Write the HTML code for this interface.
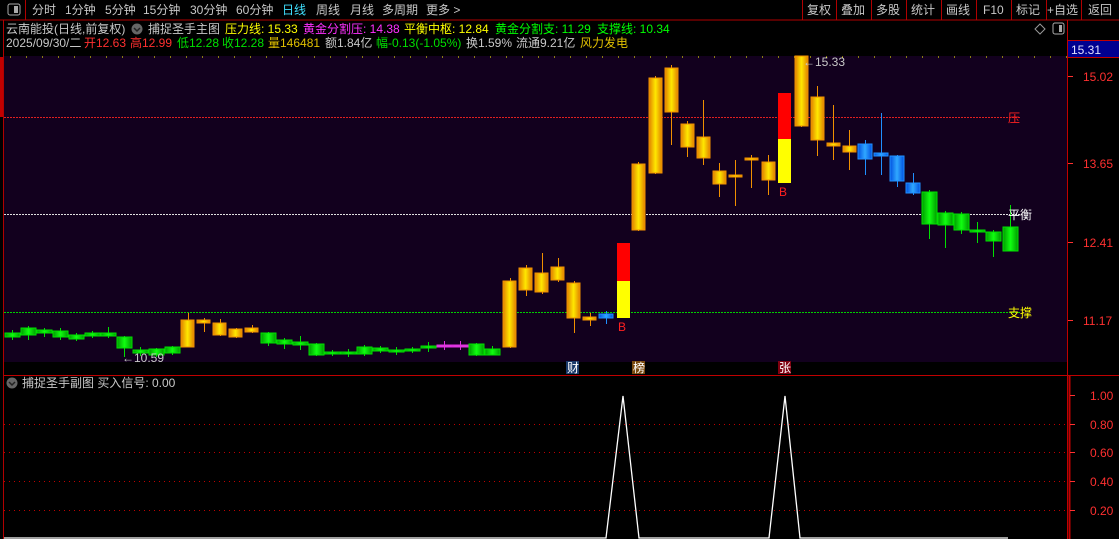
<!DOCTYPE html>
<html><head><meta charset="utf-8"><style>
html,body{margin:0;padding:0;background:#000;width:1119px;height:539px;overflow:hidden}
svg{display:block}
text{font-family:"Liberation Sans","Noto Sans CJK SC",sans-serif;font-size:12px}
</style></head><body>
<svg width="1119" height="539" xmlns="http://www.w3.org/2000/svg">
<defs>
<linearGradient id="y" x1="0" x2="1"><stop offset="0" stop-color="#e08000"/><stop offset=".5" stop-color="#ffe800"/><stop offset="1" stop-color="#e08000"/></linearGradient>
<linearGradient id="g" x1="0" x2="1"><stop offset="0" stop-color="#009a00"/><stop offset=".5" stop-color="#10ff10"/><stop offset="1" stop-color="#009a00"/></linearGradient>
<linearGradient id="b" x1="0" x2="1"><stop offset="0" stop-color="#0050e0"/><stop offset=".5" stop-color="#30a8ff"/><stop offset="1" stop-color="#0050e0"/></linearGradient>
</defs>
<rect width="1119" height="539" fill="#000"/>
<!-- toolbar -->
<line x1="0" y1="20" x2="1119" y2="20" stroke="#b00000"/>
<line x1="25.5" y1="0" x2="25.5" y2="20" stroke="#b00000"/>
<rect x="8" y="4" width="12" height="11" rx="2" fill="none" stroke="#aaa"/><rect x="14" y="6" width="4" height="7" fill="#aaa"/>
<g fill="#c8c8c8">
<text x="32" y="14">分时</text><text x="65" y="14">1分钟</text><text x="105" y="14">5分钟</text><text x="143" y="14">15分钟</text><text x="190" y="14">30分钟</text><text x="236" y="14">60分钟</text>
<text x="282" y="14" fill="#40e0ff">日线</text><text x="316" y="14">周线</text><text x="350" y="14">月线</text><text x="382" y="14">多周期</text><text x="426" y="14">更多 &gt;</text>
</g>
<g stroke="#b00000"><line x1="802.5" y1="0" x2="802.5" y2="20"/><line x1="836.5" y1="0" x2="836.5" y2="20"/><line x1="871.5" y1="0" x2="871.5" y2="20"/><line x1="906.5" y1="0" x2="906.5" y2="20"/><line x1="941.5" y1="0" x2="941.5" y2="20"/><line x1="976.5" y1="0" x2="976.5" y2="20"/><line x1="1011.5" y1="0" x2="1011.5" y2="20"/><line x1="1046.5" y1="0" x2="1046.5" y2="20"/><line x1="1081.5" y1="0" x2="1081.5" y2="20"/></g>
<g fill="#c8c8c8"><text x="807" y="14">复权</text><text x="841" y="14">叠加</text><text x="876" y="14">多股</text><text x="911" y="14">统计</text><text x="946" y="14">画线</text><text x="983" y="14">F10</text><text x="1016" y="14">标记</text><text x="1047" y="14">+自选</text><text x="1088" y="14">返回</text></g>
<!-- left bar -->
<rect x="0" y="57" width="4" height="60" fill="#c00000"/><line x1="3.5" y1="20" x2="3.5" y2="539" stroke="#b00000"/>
<!-- header -->
<text x="6" y="33" fill="#c8c8c8">云南能投(日线,前复权)</text>
<circle cx="137" cy="29" r="5.5" fill="#666"/><path d="M134 28l3 3 3-3" stroke="#222" stroke-width="1.5" fill="none"/>
<text x="148" y="33" fill="#c8c8c8">捕捉圣手主图</text>
<text x="225" y="33" fill="#ffff00">压力线: 15.33</text>
<text x="303" y="33" fill="#ff30ff">黄金分割压: 14.38</text>
<text x="404" y="33" fill="#ffff00">平衡中枢: 12.84</text>
<text x="495" y="33" fill="#00ff00">黄金分割支: 11.29</text>
<text x="597" y="33" fill="#00ff00">支撑线: 10.34</text>
<text x="6" y="47" fill="#c8c8c8">2025/09/30/二</text>
<text x="84" y="47" fill="#ff3030">开12.63</text><text x="130" y="47" fill="#ff3030">高12.99</text>
<text x="177" y="47" fill="#00e000">低12.28</text><text x="222" y="47" fill="#00e000">收12.28</text>
<text x="268" y="47" fill="#e0c000">量146481</text><text x="325" y="47" fill="#c8c8c8">额1.84亿</text>
<text x="376" y="47" fill="#00e000">幅-0.13(-1.05%)</text><text x="466" y="47" fill="#c8c8c8">换1.59%</text><text x="516" y="47" fill="#c8c8c8">流通9.21亿</text><text x="580" y="47" fill="#e0c000">风力发电</text>
<path d="M1040 24l5 5-5 5-5-5z" fill="none" stroke="#999"/>
<rect x="1053" y="23" width="11" height="11" rx="2" fill="none" stroke="#aaa"/><rect x="1059" y="25" width="3" height="7" fill="#aaa"/>
<!-- chart bg -->
<rect x="4" y="56" width="1063" height="306" fill="#12001e"/>
<line x1="10" y1="57" x2="1067" y2="57" stroke="#ffff00" stroke-dasharray="1 15"/>
<line x1="4" y1="117.5" x2="1020" y2="117.5" stroke="#e02020" stroke-dasharray="2 1"/>
<line x1="4" y1="214.5" x2="1020" y2="214.5" stroke="#e0e0e0" stroke-dasharray="2 1"/>
<line x1="4" y1="312.5" x2="1020" y2="312.5" stroke="#00d000" stroke-dasharray="2 1"/>
<!-- right axis -->
<line x1="1067.5" y1="20" x2="1067.5" y2="539" stroke="#c00000"/>
<rect x="1068" y="41" width="51" height="16" fill="#000090"/><line x1="1068" y1="40.5" x2="1119" y2="40.5" stroke="#c00000"/><line x1="1068" y1="57.5" x2="1119" y2="57.5" stroke="#c00000"/>
<text x="1071" y="54" fill="#e0e0ff">15.31</text>
<g fill="#ff3030"><text x="1083" y="81">15.02</text><text x="1083" y="168">13.65</text><text x="1083" y="247">12.41</text><text x="1083" y="325">11.17</text></g>
<g stroke="#ff3030"><line x1="1068" y1="76.5" x2="1073" y2="76.5"/><line x1="1068" y1="163.5" x2="1073" y2="163.5"/><line x1="1068" y1="242.5" x2="1073" y2="242.5"/><line x1="1068" y1="320.5" x2="1073" y2="320.5"/></g>
<!-- candles -->
<g stroke-width="1">
<g stroke="#00e000" fill="url(#g)">
<line x1="12.5" y1="330" x2="12.5" y2="340"/><rect x="5" y="333" width="15" height="4"/>
<line x1="28.5" y1="326" x2="28.5" y2="340"/><rect x="21" y="328" width="15" height="7"/>
<line x1="44.5" y1="328" x2="44.5" y2="337"/><rect x="37" y="330" width="15" height="3"/>
<line x1="60.5" y1="328" x2="60.5" y2="340"/><rect x="53" y="331" width="15" height="6"/>
<line x1="76.5" y1="333" x2="76.5" y2="341"/><rect x="69" y="335" width="15" height="4"/>
<line x1="92.5" y1="331" x2="92.5" y2="338"/><rect x="85" y="333" width="15" height="3"/>
<line x1="108.5" y1="327" x2="108.5" y2="338"/><rect x="101" y="333" width="15" height="3"/>
<line x1="124.5" y1="336" x2="124.5" y2="357"/><rect x="117" y="337" width="15" height="11"/>
<line x1="140.5" y1="347" x2="140.5" y2="356"/><rect x="133" y="350" width="15" height="3"/>
<line x1="156.5" y1="348" x2="156.5" y2="357"/><rect x="149" y="349" width="15" height="6"/>
<line x1="172.5" y1="346" x2="172.5" y2="355"/><rect x="165" y="347" width="15" height="6"/>
<line x1="268.5" y1="332" x2="268.5" y2="346"/><rect x="261" y="333" width="15" height="10"/>
<line x1="284.5" y1="338" x2="284.5" y2="349"/><rect x="277" y="340" width="15" height="4"/>
<line x1="300.5" y1="336" x2="300.5" y2="350"/><rect x="293" y="342" width="15" height="3"/>
<line x1="316.5" y1="343" x2="316.5" y2="356"/><rect x="309" y="344" width="15" height="11"/>
<line x1="332.5" y1="350" x2="332.5" y2="356"/><rect x="325" y="352" width="15" height="2"/>
<line x1="348.5" y1="349" x2="348.5" y2="357"/><rect x="341" y="352" width="15" height="2"/>
<line x1="364.5" y1="345" x2="364.5" y2="356"/><rect x="357" y="347" width="15" height="7"/>
<line x1="380.5" y1="346" x2="380.5" y2="353"/><rect x="373" y="348" width="15" height="3"/>
<line x1="396.5" y1="347" x2="396.5" y2="355"/><rect x="389" y="350" width="15" height="2"/>
<line x1="412.5" y1="347" x2="412.5" y2="353"/><rect x="405" y="349" width="15" height="2"/>
<line x1="428.5" y1="342" x2="428.5" y2="352"/><rect x="421" y="346" width="15" height="2"/>
<line x1="476.5" y1="343" x2="476.5" y2="356"/><rect x="469" y="344" width="15" height="11"/>
<line x1="492.5" y1="346" x2="492.5" y2="355"/><rect x="485" y="349" width="15" height="6"/>
<line x1="929.5" y1="190" x2="929.5" y2="239"/><rect x="922" y="192" width="15" height="32"/>
<line x1="945.5" y1="211" x2="945.5" y2="248"/><rect x="938" y="213" width="15" height="12"/>
<line x1="961.5" y1="212" x2="961.5" y2="234"/><rect x="954" y="214" width="15" height="16"/>
<line x1="977.5" y1="222" x2="977.5" y2="243"/><rect x="970" y="230" width="15" height="2"/>
<line x1="993.5" y1="230" x2="993.5" y2="257"/><rect x="986" y="232" width="15" height="9"/>
<line x1="1010.5" y1="205" x2="1010.5" y2="251"/><rect x="1003" y="227" width="15" height="24"/>
</g>
<g stroke="#e02ee0" fill="#e040e0">
<line x1="444.5" y1="341" x2="444.5" y2="350"/><rect x="437" y="345" width="15" height="2"/>
<line x1="460.5" y1="341" x2="460.5" y2="350"/><rect x="453" y="345" width="15" height="2"/>
</g>
<g stroke="#f09000" fill="url(#y)">
<line x1="188.5" y1="313" x2="188.5" y2="347"/><rect x="181" y="320" width="13" height="27"/>
<line x1="204.5" y1="318" x2="204.5" y2="332"/><rect x="197" y="320" width="13" height="3"/>
<line x1="220.5" y1="319" x2="220.5" y2="336"/><rect x="213" y="323" width="13" height="12"/>
<line x1="236.5" y1="328" x2="236.5" y2="338"/><rect x="229" y="329" width="13" height="8"/>
<line x1="252.5" y1="325" x2="252.5" y2="333"/><rect x="245" y="328" width="13" height="4"/>
<line x1="510.5" y1="278" x2="510.5" y2="348"/><rect x="503" y="281" width="13" height="66"/>
<line x1="526.5" y1="265" x2="526.5" y2="296"/><rect x="519" y="268" width="13" height="22"/>
<line x1="542.5" y1="253" x2="542.5" y2="294"/><rect x="535" y="273" width="13" height="19"/>
<line x1="558.5" y1="258" x2="558.5" y2="282"/><rect x="551" y="267" width="13" height="13"/>
<line x1="574.5" y1="281" x2="574.5" y2="333"/><rect x="567" y="283" width="13" height="35"/>
<line x1="590.5" y1="313" x2="590.5" y2="326"/><rect x="583" y="317" width="13" height="3"/>
<line x1="638.5" y1="162" x2="638.5" y2="231"/><rect x="632" y="164" width="13" height="66"/>
<line x1="655.5" y1="76" x2="655.5" y2="174"/><rect x="649" y="78" width="13" height="95"/>
<line x1="671.5" y1="65" x2="671.5" y2="145"/><rect x="665" y="68" width="13" height="44"/>
<line x1="687.5" y1="121" x2="687.5" y2="157"/><rect x="681" y="124" width="13" height="23"/>
<line x1="703.5" y1="100" x2="703.5" y2="165"/><rect x="697" y="137" width="13" height="21"/>
<line x1="719.5" y1="163" x2="719.5" y2="197"/><rect x="713" y="171" width="13" height="13"/>
<line x1="735.5" y1="160" x2="735.5" y2="206"/><rect x="729" y="175" width="13" height="2"/>
<line x1="751.5" y1="155" x2="751.5" y2="188"/><rect x="745" y="158" width="13" height="2"/>
<line x1="768.5" y1="155" x2="768.5" y2="195"/><rect x="762" y="162" width="13" height="18"/>
<line x1="801.5" y1="56" x2="801.5" y2="127"/><rect x="795" y="56" width="13" height="70"/>
<line x1="817.5" y1="86" x2="817.5" y2="156"/><rect x="811" y="97" width="13" height="43"/>
<line x1="833.5" y1="105" x2="833.5" y2="160"/><rect x="827" y="143" width="13" height="3"/>
<line x1="849.5" y1="130" x2="849.5" y2="170"/><rect x="843" y="146" width="13" height="6"/>
</g>
<g stroke="#2090ff" fill="url(#b)">
<line x1="606.5" y1="311" x2="606.5" y2="324"/><rect x="599" y="314" width="14" height="4"/>
<line x1="865.5" y1="140" x2="865.5" y2="175"/><rect x="858" y="144" width="14" height="15"/>
<line x1="881.5" y1="113" x2="881.5" y2="175"/><rect x="874" y="153" width="14" height="3"/>
<line x1="897.5" y1="155" x2="897.5" y2="187"/><rect x="890" y="156" width="14" height="25"/>
<line x1="913.5" y1="173" x2="913.5" y2="195"/><rect x="906" y="183" width="14" height="10"/>
</g>
</g>
<!-- B bars -->
<rect x="617" y="243" width="13" height="38" fill="#ff0000"/><rect x="617" y="281" width="13" height="37" fill="#ffff00"/>
<text x="618" y="331" fill="#ff2020" font-size="14">B</text>
<rect x="778" y="93" width="13" height="46" fill="#ff0000"/><rect x="778" y="139" width="13" height="44" fill="#ffff00"/>
<text x="779" y="196" fill="#ff2020" font-size="14">B</text>
<!-- labels -->
<text x="1008" y="122" fill="#ff2020">压</text>
<text x="1008" y="219" fill="#ffffff">平衡</text>
<text x="1008" y="317" fill="#ffff00">支撑</text>
<text x="122" y="362" fill="#c8c8c8">←10.59</text>
<text x="803" y="66" fill="#c8c8c8">←15.33</text>
<!-- markers -->
<rect x="566" y="361" width="13" height="13" fill="#1a3a6a"/><text x="567" y="372" fill="#fff" font-size="11">财</text>
<rect x="632" y="361" width="13" height="13" fill="#7a4a10"/><text x="633" y="372" fill="#fff" font-size="11">榜</text>
<rect x="778" y="361" width="13" height="13" fill="#800010"/><text x="779" y="372" fill="#fff" font-size="11">张</text>
<!-- sub chart -->
<line x1="4" y1="375.5" x2="1119" y2="375.5" stroke="#c00000"/>
<line x1="1069.5" y1="376" x2="1069.5" y2="539" stroke="#c00000" stroke-width="2"/>
<circle cx="12" cy="383" r="5.5" fill="#666"/><path d="M9 382l3 3 3-3" stroke="#222" stroke-width="1.5" fill="none"/>
<text x="22" y="387" fill="#c8c8c8">捕捉圣手副图 买入信号: 0.00</text>
<g stroke="#c00000" stroke-dasharray="1 4"><line x1="4" y1="424.5" x2="1067" y2="424.5"/><line x1="4" y1="452.5" x2="1067" y2="452.5"/><line x1="4" y1="481.5" x2="1067" y2="481.5"/><line x1="4" y1="510.5" x2="1067" y2="510.5"/></g>
<g fill="#ff3030"><text x="1090" y="400">1.00</text><text x="1090" y="429">0.80</text><text x="1090" y="457">0.60</text><text x="1090" y="486">0.40</text><text x="1090" y="515">0.20</text></g>
<g stroke="#ff3030"><line x1="1070" y1="395.5" x2="1075" y2="395.5"/><line x1="1070" y1="424.5" x2="1075" y2="424.5"/><line x1="1070" y1="452.5" x2="1075" y2="452.5"/><line x1="1070" y1="481.5" x2="1075" y2="481.5"/><line x1="1070" y1="510.5" x2="1075" y2="510.5"/></g>
<polyline points="4,538 606,538 623,396 639,538 769,538 785,396 800,538 1008,538" fill="none" stroke="#fff" stroke-width="1.3"/>
</svg>
</body></html>
